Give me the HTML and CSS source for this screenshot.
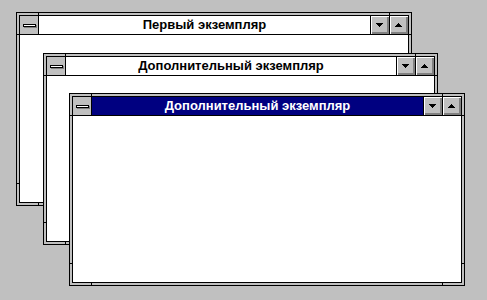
FILE: index.html
```html
<!DOCTYPE html>
<html lang="ru">
<head>
    <meta charset="UTF-8">
    <title>Экземпляры</title>
    <link rel="stylesheet" href="styles.css">
</head>
<body>

<div class="desktop">

    <div class="window win-first">
        <div class="frame">
            <div class="titlebar">
                <div class="sysmenu"><span class="sysbar"></span></div>
                <div class="caption">Первый экземпляр</div>
                <div class="capbtn">
                    <svg width="7" height="4" viewBox="0 0 7 4"><path d="M0 0h7v1H0zM1 1h5v1H1zM2 2h3v1H2zM3 3h1v1H3z"/></svg>
                </div>
                <div class="capbtn">
                    <svg width="7" height="4" viewBox="0 0 7 4"><path d="M3 0h1v1H3zM2 1h3v1H2zM1 2h5v1H1zM0 3h7v1H0z"/></svg>
                </div>
            </div>
            <div class="client"></div>
        </div>
    </div>

    <div class="window win-second">
        <div class="frame">
            <div class="titlebar">
                <div class="sysmenu"><span class="sysbar"></span></div>
                <div class="caption">Дополнительный экземпляр</div>
                <div class="capbtn">
                    <svg width="7" height="4" viewBox="0 0 7 4"><path d="M0 0h7v1H0zM1 1h5v1H1zM2 2h3v1H2zM3 3h1v1H3z"/></svg>
                </div>
                <div class="capbtn">
                    <svg width="7" height="4" viewBox="0 0 7 4"><path d="M3 0h1v1H3zM2 1h3v1H2zM1 2h5v1H1zM0 3h7v1H0z"/></svg>
                </div>
            </div>
            <div class="client"></div>
        </div>
    </div>

    <div class="window win-third active">
        <div class="frame">
            <div class="titlebar">
                <div class="sysmenu"><span class="sysbar"></span></div>
                <div class="caption">Дополнительный экземпляр</div>
                <div class="capbtn">
                    <svg width="7" height="4" viewBox="0 0 7 4"><path d="M0 0h7v1H0zM1 1h5v1H1zM2 2h3v1H2zM3 3h1v1H3z"/></svg>
                </div>
                <div class="capbtn">
                    <svg width="7" height="4" viewBox="0 0 7 4"><path d="M3 0h1v1H3zM2 1h3v1H2zM1 2h5v1H1zM0 3h7v1H0z"/></svg>
                </div>
            </div>
            <div class="client"></div>
        </div>
    </div>

</div>

</body>
</html>
```

FILE: styles.css
```css
body {
    margin: 0;
    padding: 0;
    background-color: #c0c0c0;
    font-family: 'Liberation Sans', Arial, sans-serif;
}

.desktop {
    position: relative;
    width: 487px;
    height: 300px;
    overflow: hidden;
    background-color: #c0c0c0;
}

/* sizing frame: black line, 2px grey, black line; corner ticks drawn as lines under the inner frame */
.window {
    position: absolute;
    box-sizing: border-box;
    width: 396px;
    border: 1px solid #000;
    padding: 2px;
    display: flex;
    background:
        linear-gradient(#000, #000) left 21px top 0 / 1px 100% no-repeat,
        linear-gradient(#000, #000) right 21px top 0 / 1px 100% no-repeat,
        linear-gradient(#000, #000) left 0 top 21px / 100% 1px no-repeat,
        linear-gradient(#000, #000) left 0 bottom 21px / 100% 1px no-repeat,
        #c0c0c0;
}

.win-first {
    left: 16px;
    top: 12px;
    height: 194px;
}

.win-second {
    left: 43px;
    top: 53px;
    width: 395px;
    height: 192px;
}

.win-third {
    left: 69px;
    top: 93px;
    height: 193px;
}

.frame {
    flex: 1;
    display: flex;
    flex-direction: column;
    border: 1px solid #000;
    background-color: #fff;
}

.titlebar {
    display: flex;
    height: 18px;
    border-bottom: 1px solid #000;
}

.sysmenu {
    width: 18px;
    border-right: 1px solid #000;
    background-color: #c0c0c0;
    display: flex;
    align-items: center;
    justify-content: center;
}

.sysbar {
    box-sizing: border-box;
    width: 13px;
    height: 3px;
    margin: 1px 0 0 0;
    border: 1px solid #000;
    background-color: #fff;
    box-shadow: 1px 1px 0 #808080;
}

.caption {
    flex: 1;
    background-color: #fff;
    color: #000;
    font-size: 13px;
    font-weight: bold;
    line-height: 18px;
    text-align: center;
    white-space: nowrap;
    overflow: hidden;
}

.active .caption {
    background-color: #000080;
    color: #fff;
}

.capbtn {
    width: 18px;
    border-left: 1px solid #000;
    background-color: #c0c0c0;
    box-shadow: inset 1px 1px 0 #fff, inset -1px -1px 0 #808080, inset -2px -2px 0 #808080;
    display: flex;
    align-items: center;
    justify-content: center;
}

.capbtn svg {
    display: block;
    margin: 0 1px 1px 0;
    fill: #000;
    shape-rendering: crispEdges;
}

.client {
    flex: 1;
    background-color: #fff;
}
```
